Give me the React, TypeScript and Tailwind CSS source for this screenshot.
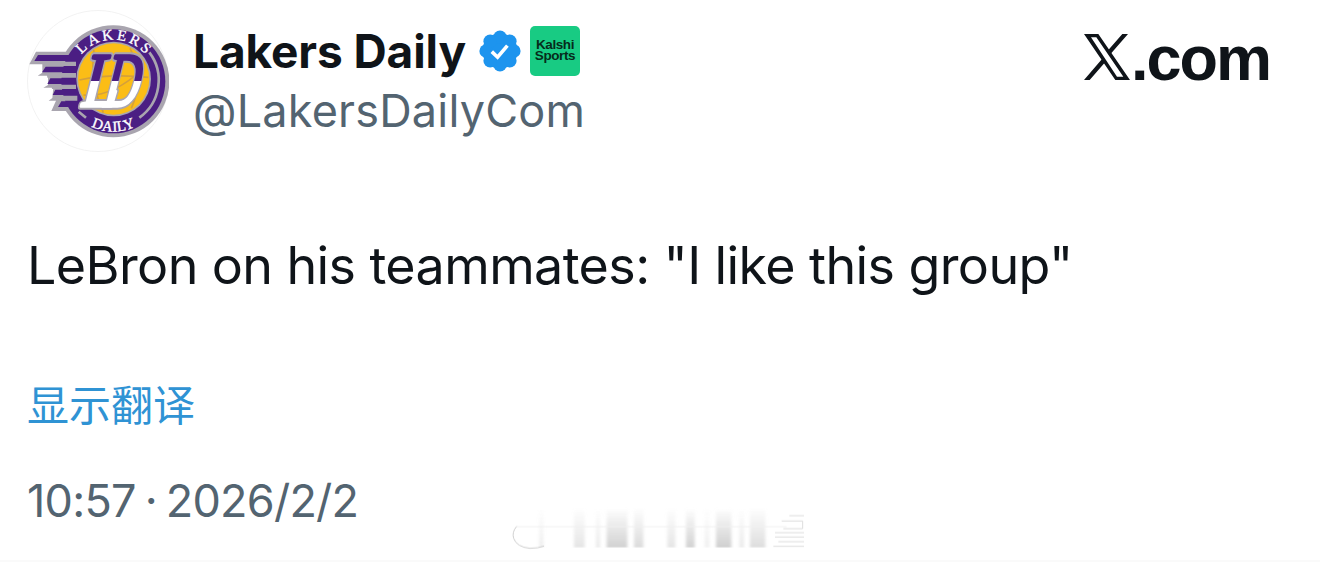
import React from 'react';

// Profile shown at the top of the post
const author = {
  name: 'Lakers Daily',
  handle: '@LakersDailyCom',
};

const post = {
  words: ['LeBron', 'on', 'his', 'teammates:', '"I', 'like', 'this', 'group"'],
  translate: '显示翻译',
  time: '10:57 · 2026/2/2',
};

function TeamLogo() {
  return (
    <svg viewBox="21 15 426 426" className="h-[142px] w-[142px] shrink-0">
      <defs>
        <linearGradient id="mono" gradientUnits="userSpaceOnUse" x1="0" y1="140" x2="0" y2="310">
          <stop offset="0.52" stopColor="#4b1e83" />
          <stop offset="0.52" stopColor="#ffffff" />
        </linearGradient>
        <path id="arcTop" d="M155 229a125 125 0 0 1 250 0" />
        <path id="arcBottom" d="M129 229a151 151 0 0 0 302 0" />
      </defs>
      <circle cx="234" cy="228" r="211.5" fill="#fff" stroke="#ececec" strokeWidth="2" />
      <circle cx="280" cy="229" r="168" fill="#a9a5af" />
      <path
        d="M48 140H150L200 175V290L150 318H94L108 287H86L97 279L100 248H70L84 240V212H53L67 203V178H28Z"
        fill="#a9a5af"
      />
      <circle cx="280" cy="229" r="156" fill="#4b1e83" />
      <path
        d="M54 150H180V168H43ZM77 185H180V202H66ZM91 220H180V237H82ZM106 254H180V270H98ZM124 289H190V306H114Z"
        fill="#4b1e83"
      />
      <path
        d="M66 170H168V183H70ZM80 204H168V218H82ZM94 239H168V252H96ZM106 272H172V287H110Z"
        fill="#a9a5af"
      />
      <path d="M388 142a138 138 0 0 1-30 196M176 320l22 18" fill="none" stroke="#a9a5af" strokeWidth="8" />
      <circle cx="281" cy="222" r="112" fill="#a9a5af" />
      <circle cx="281" cy="222" r="107" fill="#fbbd16" />
      <g fill="none" stroke="#d4a03c" strokeWidth="5">
        <path d="M178 225q90-20 207-8M222 135q-14 90 28 188M330 130q46 82 4 180" />
        <path d="M190 270q80 10 176-75" />
      </g>
      <g
        transform="translate(0 304) skewX(-14)"
        fontFamily="Liberation Serif, serif"
        fontSize="230"
        strokeLinejoin="round"
      >
        <g stroke="#a9a5af" strokeWidth="22" fill="none">
          <text x="244" y="0" textLength="104" lengthAdjust="spacingAndGlyphs">D</text>
          <text x="178" y="0" textLength="110" lengthAdjust="spacingAndGlyphs">L</text>
        </g>
        <g transform="translate(0 -304)" stroke="url(#mono)" strokeWidth="10" fill="url(#mono)">
          <text x="244" y="304" textLength="104" lengthAdjust="spacingAndGlyphs">D</text>
          <text x="178" y="304" textLength="110" lengthAdjust="spacingAndGlyphs">L</text>
        </g>
      </g>
      <g fontFamily="Liberation Serif, serif" fontSize="45" fill="#fff" stroke="#fff" strokeWidth="1">
        <text textAnchor="middle" textLength="218">
          <textPath href="#arcTop" startOffset="50%">LAKERS</textPath>
        </text>
        <text textAnchor="middle" textLength="138">
          <textPath href="#arcBottom" startOffset="50%">DAILY</textPath>
        </text>
      </g>
    </svg>
  );
}

function VerifiedBadge() {
  return (
    <svg viewBox="1.5 1.5 21 21" className="h-[42px] w-[42px] shrink-0">
      <g fill="#1d94ee">
        <circle cx="12" cy="12" r="8.8" />
        <circle cx="12" cy="5.1" r="3.4" />
        <circle cx="16.9" cy="7.1" r="3.4" />
        <circle cx="18.9" cy="12" r="3.4" />
        <circle cx="16.9" cy="16.9" r="3.4" />
        <circle cx="12" cy="18.9" r="3.4" />
        <circle cx="7.1" cy="16.9" r="3.4" />
        <circle cx="5.1" cy="12" r="3.4" />
        <circle cx="7.1" cy="7.1" r="3.4" />
      </g>
      <path d="M7.9 12.3l2.9 2.8 4.9-5.8" fill="none" stroke="#fff" strokeWidth="1.8" />
    </svg>
  );
}

function XMark() {
  return (
    <svg viewBox="0 0 138 138" className="h-[46px] w-[46px] shrink-0" fill="#0f1419">
      <path fillRule="evenodd" d="M0 0H43L138 138H94ZM21 10L99 128H118L37 10Z" />
      <path d="M115 0H132L79 61L71 50ZM0 138H17L64 84L56 73Z" />
    </svg>
  );
}

// Faded strip at the foot of the card
const bars = [
  { x: 118, w: 12, o: 0.35 },
  { x: 222, w: 32, o: 0.5 },
  { x: 288, w: 12, o: 0.4 },
  { x: 320, w: 62, o: 0.9 },
  { x: 402, w: 28, o: 0.7 },
  { x: 502, w: 24, o: 0.5 },
  { x: 558, w: 26, o: 0.9 },
  { x: 614, w: 14, o: 0.3 },
  { x: 648, w: 46, o: 0.95 },
  { x: 718, w: 14, o: 0.4 },
  { x: 750, w: 46, o: 0.65 },
];

function FadedStrip() {
  return (
    <svg viewBox="0 0 960 201" className="h-[67px] w-[320px]">
      <defs>
        <linearGradient id="fade" x1="0" y1="0" x2="0" y2="1">
          <stop offset="0" stopColor="#cccccc" stopOpacity="0" />
          <stop offset="1" stopColor="#cccccc" />
        </linearGradient>
        <filter id="soft">
          <feGaussianBlur stdDeviation="4 0.5" />
        </filter>
      </defs>
      <g filter="url(#soft)">
        {bars.map((bar) => (
          <rect key={bar.x} x={bar.x} y="38" width={bar.w} height="119" fill="url(#fade)" opacity={bar.o} />
        ))}
      </g>
      <path d="M50 95H860" stroke="#f1f1f1" strokeWidth="3" />
      <path d="M50 94Q35 112 41 130Q50 156 90 160Q115 160 132 153" fill="none" stroke="#cfcfcf" strokeWidth="3" />
      <path
        d="M868 62H912M845 78H908V101H850M825 113H912M825 126H912M835 140H912M820 154H912"
        fill="none"
        stroke="#dddddd"
        strokeWidth="3"
      />
    </svg>
  );
}

export default function App() {
  return (
    <div className="flex h-[562px] w-[1320px] flex-col overflow-hidden border-b-2 border-[#fafafa] bg-white pl-[27px] font-[Inter,'Noto_Sans_CJK_SC',sans-serif] text-[#0f1419]">
      <header className="flex h-[152px] items-start pt-[10px]">
        <TeamLogo />
        <div className="ml-[24px] flex flex-col pt-[11px]">
          <div className="flex h-[60px] items-center">
            <span className="w-[275px] whitespace-nowrap text-[46px] font-bold leading-[60px] tracking-[-0.1px]">{author.name}</span>
            <div className="ml-[11px] flex items-center gap-[9px]">
              <VerifiedBadge />
              <div className="flex h-[50px] w-[50px] flex-col items-center justify-center rounded-[5px] bg-[#18cb83] pb-[2px] font-['Liberation_Sans',sans-serif] text-[13.5px] font-bold leading-[11.5px] tracking-[-0.4px] text-[#062b1b]">
                <span>Kalshi</span>
                <span>Sports</span>
              </div>
            </div>
          </div>
          <span className="whitespace-nowrap text-[45px] leading-[60px] tracking-[0.2px] text-[#536471]">{author.handle}</span>
        </div>
        <div className="ml-auto mr-[50px] flex items-start pt-[24px]">
          <XMark />
          <span className="-mt-[10px] ml-[1px] text-[63px] font-bold leading-[68px] tracking-[-2px] font-['Liberation_Sans',sans-serif]">.com</span>
        </div>
      </header>

      <p className="mt-[77px] flex h-[74px] gap-[14px] whitespace-nowrap text-[52px] leading-[74px] tracking-[-0.6px]">
        {post.words.map((word) => (
          <span key={word}>{word}</span>
        ))}
      </p>

      <a className="mt-[73px] text-[42px] leading-[60px] text-[#2f93d4]">{post.translate}</a>

      <time className="mt-[35px] whitespace-nowrap text-[45px] leading-[60px] tracking-[-0.75px] [word-spacing:-3px] text-[#536471]">{post.time}</time>

      <div className="-mt-[36px] ml-[473px]">
        <FadedStrip />
      </div>
    </div>
  );
}
